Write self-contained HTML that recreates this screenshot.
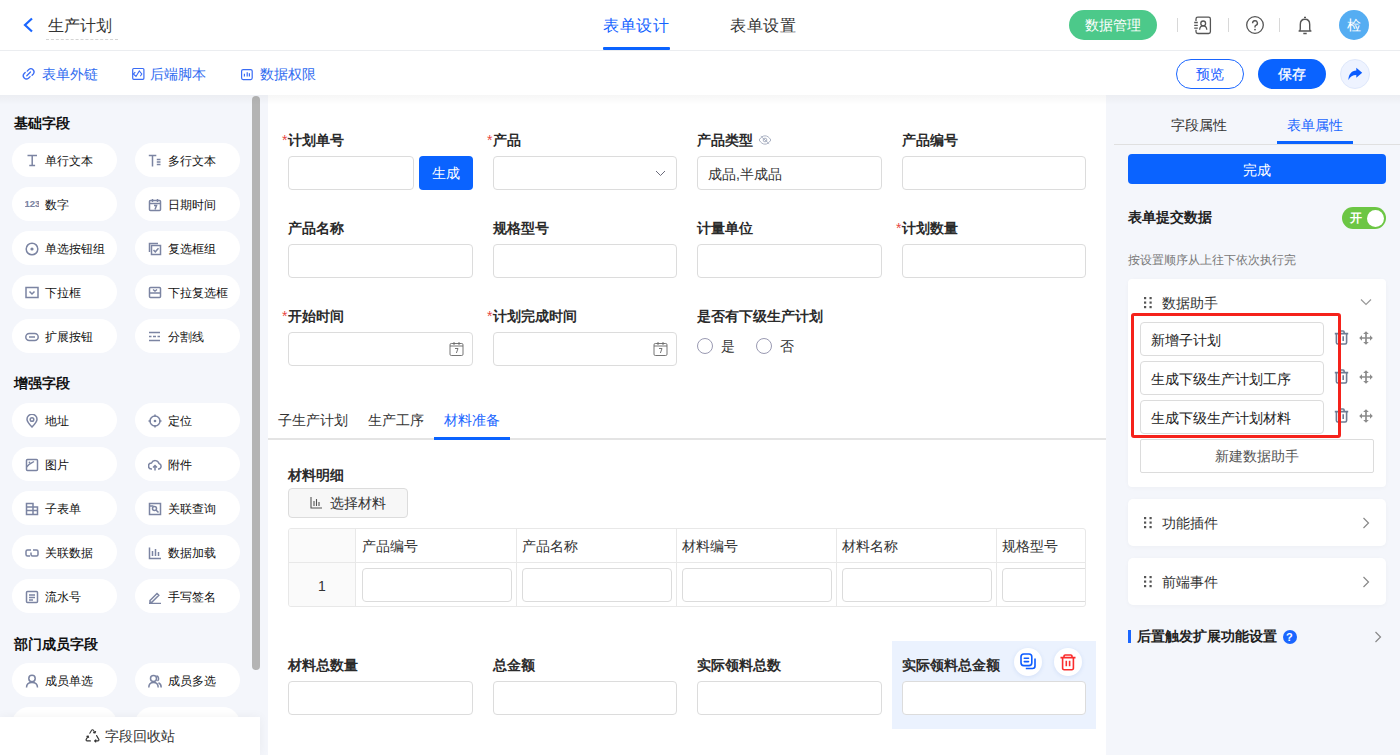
<!DOCTYPE html>
<html><head><meta charset="utf-8">
<style>
*{box-sizing:border-box;margin:0;padding:0}
html,body{width:1400px;height:755px;overflow:hidden;background:#f4f6fb;font-family:"Liberation Sans",sans-serif;color:#333;font-size:14px}
.a{position:absolute}
.t{position:absolute;white-space:nowrap;line-height:1}
/* header */
#hdr{position:absolute;left:0;top:0;width:1400px;height:51px;background:#fff;border-bottom:1px solid #ebedf0}
#tb{position:absolute;left:0;top:51px;width:1400px;height:44px;background:#fff}
.sep{position:absolute;width:1px;height:14px;background:#d8d8d8;top:18px}
.pill{position:absolute;border-radius:17px;background:#fff;height:34px;width:105px}
.ptxt{position:absolute;left:33px;top:12px;font-size:12px;line-height:12px;color:#111;white-space:nowrap}
.pico{position:absolute;left:13px;top:11px;width:14px;height:14px}
.sec{position:absolute;left:14px;font-size:14px;font-weight:bold;color:#111;line-height:14px;white-space:nowrap}
.lbl{position:absolute;font-size:14px;font-weight:bold;color:#2b2b2b;line-height:14px;white-space:nowrap}
.req{color:#e8473f;font-weight:normal}
.inp{position:absolute;background:#fff;border:1px solid #dcdcdc;border-radius:4px;height:34px}
</style></head><body>
<div id="hdr">
  <svg class="a" style="left:22px;top:17px" width="12" height="16" viewBox="0 0 12 16"><path d="M10 1.5 L3 8 L10 14.5" fill="none" stroke="#1a66ff" stroke-width="2.2"/></svg>
  <div class="t" style="left:48px;top:18px;font-size:16px;color:#333">生产计划</div>
  <div class="a" style="left:46px;top:39px;width:72px;border-top:1px dashed #d4d4d4"></div>
  <div class="t" style="left:603px;top:17.5px;font-size:16px;color:#1463ff;letter-spacing:0.7px">表单设计</div>
  <div class="a" style="left:603px;top:47px;width:67px;height:3px;background:#0a63ff;border-radius:1px"></div>
  <div class="t" style="left:730px;top:17.5px;font-size:16px;color:#333;letter-spacing:0.7px">表单设置</div>
  <div class="a" style="left:1069px;top:10px;width:88px;height:30px;border-radius:15px;background:#4cc98a"></div>
  <div class="t" style="left:1085px;top:18px;font-size:14px;color:#fff">数据管理</div>
  
  <svg class="a" style="left:1188px;top:12px" width="30" height="26" viewBox="0 0 30 26"><path d="M8 9V7a1.8 1.8 0 0 1 1.8-1.8h10.8a1.8 1.8 0 0 1 1.8 1.8v12.7a1.8 1.8 0 0 1-1.8 1.8H9.8A1.8 1.8 0 0 1 8 19.7V17.8" fill="none" stroke="#555" stroke-width="1.3"/><path d="M6.2 10.5h3.6M6.2 13.4h3.6M6.2 16.2h3.6" stroke="#555" stroke-width="1.3"/><circle cx="15.2" cy="11.4" r="2.4" fill="none" stroke="#555" stroke-width="1.3"/><path d="M11.6 17.7C11.8 15.3 13.3 13.8 15.2 13.8S18.6 15.3 18.8 17.7" fill="none" stroke="#555" stroke-width="1.3"/></svg>
  <svg class="a" style="left:1245px;top:15px" width="20" height="20" viewBox="0 0 20 20"><circle cx="10" cy="10" r="8.3" fill="none" stroke="#555" stroke-width="1.3"/><path d="M7.6 8.2A2.4 2.4 0 1 1 10.8 10.4C10.2 10.7 10 11.1 10 11.8V12.6" fill="none" stroke="#555" stroke-width="1.4"/><circle cx="10" cy="14.6" r="0.9" fill="#555"/></svg>
  <svg class="a" style="left:1290px;top:12px" width="30" height="26" viewBox="0 0 30 26"><path d="M8.6 19H21.4M9.8 19C10 18.5 10.3 17.8 10.3 16.5V12.5C10.3 9.3 12.3 7.3 15 7.3S19.7 9.3 19.7 12.5V16.5C19.7 17.8 20 18.5 20.2 19" fill="none" stroke="#555" stroke-width="1.4"/><path d="M14 5.3h2M13.3 21.5h3.4" stroke="#555" stroke-width="1.3"/></svg>
<div class="sep" style="left:1177px"></div>
  <div class="sep" style="left:1228px"></div>
  <div class="sep" style="left:1279px"></div>
  <div class="a" style="left:1339px;top:10px;width:30px;height:30px;border-radius:50%;background:#55adf2"></div>
  <div class="t" style="left:1347px;top:18px;font-size:14px;color:#fff">检</div>
</div>
<div id="tb">
  
  <svg class="a" style="left:15px;top:9px" width="30" height="28" viewBox="0 0 30 28"><path d="M10.2 12.5L9 13.7a3.2 3.2 0 0 0 4.5 4.5l1.6-1.6M17.1 15.2L18.3 14a3.2 3.2 0 0 0-4.5-4.5L12.2 11.1M11.8 15.7L15.5 12" fill="none" stroke="#3a6cf5" stroke-width="1.3" stroke-linecap="round"/></svg>
  <svg class="a" style="left:125px;top:9px" width="30" height="28" viewBox="0 0 30 28"><rect x="7.7" y="8.5" width="11.2" height="10.8" rx="1" fill="none" stroke="#3a6cf5" stroke-width="1.2"/><path d="M10.3 12.2L8.3 14L11 16.5L14.3 11L16.8 14L15.3 16.2" fill="none" stroke="#3a6cf5" stroke-width="1.1"/></svg>
  <svg class="a" style="left:232px;top:9px" width="30" height="28" viewBox="0 0 30 28"><rect x="9.6" y="9.6" width="10.6" height="10" rx="1.5" fill="none" stroke="#3a6cf5" stroke-width="1.2"/><path d="M12.4 13.8V16.6M15.2 12.2V16.6M17.4 13.2V16.6" stroke="#3a6cf5" stroke-width="1.2"/></svg>
<div class="t" style="left:42px;top:16px;font-size:14px;color:#2f6bf0">表单外链</div>
  <div class="t" style="left:150px;top:16px;font-size:14px;color:#2f6bf0">后端脚本</div>
  <div class="t" style="left:260px;top:16px;font-size:14px;color:#2f6bf0">数据权限</div>
  <div class="a" style="left:1176px;top:8px;width:68px;height:30px;border-radius:15px;border:1px solid #1a66ff;background:#fff"></div>
  <div class="t" style="left:1196px;top:16px;color:#1a5cff">预览</div>
  <div class="a" style="left:1258px;top:8px;width:68px;height:30px;border-radius:15px;background:#0a63ff"></div>
  <div class="t" style="left:1278px;top:16px;color:#fff;font-weight:500;-webkit-text-stroke:0.3px #fff">保存</div>
  <div class="a" style="left:1340px;top:8px;width:30px;height:30px;border-radius:50%;background:#eef3ff;border:1px solid #dfe8fb"></div><svg class="a" style="left:1340px;top:8px" width="30" height="30" viewBox="0 0 30 30"><path d="M16.3 8.8L22.2 13.7L16.3 18.7V15.9C12.6 15.9 10.2 17.3 8.4 20.9C8.6 15.3 11.6 11.6 16.3 11.5Z" fill="#0a5cff"/></svg>
</div>
<!-- sidebar -->
<div id="side" class="a" style="left:0;top:95px;width:268px;height:660px;background:#f4f6fb;overflow:hidden">
<div class="a" style="left:0;top:-95px;width:268px;height:755px">
<div class="sec" style="top:116px">基础字段</div>
<div class="pill" style="left:12px;top:143px"><svg class="pico" viewBox="0 0 14 14" width="14" height="14"><path d="M2.5 1.5h9.5M7.2 1.5v10M4.3 11.5h5.8" fill="none" stroke="#7b84a2" stroke-width="1.5"/></svg><div class="ptxt">单行文本</div></div>
<div class="pill" style="left:135px;top:143px"><svg class="pico" viewBox="0 0 14 14" width="14" height="14"><path d="M0.8 1.5h7.5M4.5 1.5v11M8.8 5.5h3.7M8.8 8h3.7M8.8 10.5h3.7" fill="none" stroke="#7b84a2" stroke-width="1.5"/></svg><div class="ptxt">多行文本</div></div>
<div class="pill" style="left:12px;top:187px"><svg class="pico" viewBox="0 0 14 14" width="14" height="14"><text x="-0.5" y="8.6" style="font-family:'Liberation Sans';font-weight:bold;font-size:9.5px" fill="#7b84a2" stroke="#7b84a2" stroke-width="0.15" letter-spacing="0">123</text></svg><div class="ptxt">数字</div></div>
<div class="pill" style="left:135px;top:187px"><svg class="pico" viewBox="0 0 14 14" width="14" height="14"><rect x="1.5" y="2.5" width="11" height="10" rx="1" fill="none" stroke="#7b84a2" stroke-width="1.5"/><path d="M1.5 5.5h11M4.5 1v3M9.5 1v3M6 7.5h2.5l-1.5 4" fill="none" stroke="#7b84a2" stroke-width="1.5"/></svg><div class="ptxt">日期时间</div></div>
<div class="pill" style="left:12px;top:231px"><svg class="pico" viewBox="0 0 14 14" width="14" height="14"><circle cx="7" cy="7" r="5.8" fill="none" stroke="#7b84a2" stroke-width="1.5"/><circle cx="7" cy="7" r="1.6" fill="#7a84a0"/></svg><div class="ptxt">单选按钮组</div></div>
<div class="pill" style="left:135px;top:231px"><svg class="pico" viewBox="0 0 14 14" width="14" height="14"><path d="M1.5 10V1.5H10" fill="none" stroke="#7b84a2" stroke-width="1.5"/><rect x="3.5" y="3.5" width="9" height="9" fill="none" stroke="#7b84a2" stroke-width="1.5"/><path d="M5.5 8l1.8 1.8 3.2-3.5" fill="none" stroke="#7b84a2" stroke-width="1.5"/></svg><div class="ptxt">复选框组</div></div>
<div class="pill" style="left:12px;top:275px"><svg class="pico" viewBox="0 0 14 14" width="14" height="14"><rect x="1" y="1.5" width="12" height="10" fill="none" stroke="#7b84a2" stroke-width="1.5"/><path d="M4.5 5.5l2.5 2.5 2.5-2.5" fill="none" stroke="#7b84a2" stroke-width="1.5"/></svg><div class="ptxt">下拉框</div></div>
<div class="pill" style="left:135px;top:275px"><svg class="pico" viewBox="0 0 14 14" width="14" height="14"><rect x="1.5" y="1.5" width="11" height="10" rx="1" fill="none" stroke="#7b84a2" stroke-width="1.5"/><path d="M1.5 7h11M5 3.5l2 1.5 2-1.5" fill="none" stroke="#7b84a2" stroke-width="1.5"/></svg><div class="ptxt">下拉复选框</div></div>
<div class="pill" style="left:12px;top:319px"><svg class="pico" viewBox="0 0 14 14" width="14" height="14"><rect x="0.8" y="3.5" width="12.4" height="7" rx="3.5" fill="none" stroke="#7b84a2" stroke-width="1.5"/><path d="M4 7h6" fill="none" stroke="#7b84a2" stroke-width="1.5"/></svg><div class="ptxt">扩展按钮</div></div>
<div class="pill" style="left:135px;top:319px"><svg class="pico" viewBox="0 0 14 14" width="14" height="14"><path d="M1 2.5h11M1 6.5h2.5M5 6.5h3M9.5 6.5h2.5M1 10.5h11" fill="none" stroke="#7b84a2" stroke-width="1.5"/></svg><div class="ptxt">分割线</div></div>
<div class="sec" style="top:376px">增强字段</div>
<div class="pill" style="left:12px;top:403px"><svg class="pico" viewBox="0 0 14 14" width="14" height="14"><path d="M7 13C3.5 9.5 2 7.3 2 5.3A5 5 0 0 1 12 5.3C12 7.3 10.5 9.5 7 13Z" fill="none" stroke="#7b84a2" stroke-width="1.5"/><circle cx="7" cy="5.5" r="1.8" fill="none" stroke="#7b84a2" stroke-width="1.5"/></svg><div class="ptxt">地址</div></div>
<div class="pill" style="left:135px;top:403px"><svg class="pico" viewBox="0 0 14 14" width="14" height="14"><circle cx="7" cy="7" r="5" fill="none" stroke="#7b84a2" stroke-width="1.5"/><circle cx="7" cy="7" r="1.3" fill="#7a84a0"/><path d="M7 0.5v2.5M7 11v2.5M0.5 7h2.5M11 7h2.5" fill="none" stroke="#7b84a2" stroke-width="1.5"/></svg><div class="ptxt">定位</div></div>
<div class="pill" style="left:12px;top:447px"><svg class="pico" viewBox="0 0 14 14" width="14" height="14"><rect x="1.5" y="1.5" width="11" height="11" rx="1" fill="none" stroke="#7b84a2" stroke-width="1.5"/><path d="M1.5 9C5 5 7 5 9 3.5" fill="none" stroke="#7b84a2" stroke-width="1.5"/><circle cx="4.5" cy="4.5" r="0.9" fill="#7a84a0"/></svg><div class="ptxt">图片</div></div>
<div class="pill" style="left:135px;top:447px"><svg class="pico" viewBox="0 0 14 14" width="14" height="14"><path d="M4 11H3.5A3 3 0 0 1 3.5 5 A4 4 0 0 1 11 5.5 A2.8 2.8 0 0 1 10.5 11H10" fill="none" stroke="#7b84a2" stroke-width="1.5"/><path d="M7 12.5V7.5M5 9.5l2-2 2 2" fill="none" stroke="#7b84a2" stroke-width="1.5"/></svg><div class="ptxt">附件</div></div>
<div class="pill" style="left:12px;top:491px"><svg class="pico" viewBox="0 0 14 14" width="14" height="14"><path d="M1.5 12.5V1.5H8V5H12.5V12.5Z M1.5 5H8M1.5 8.5H12.5M8 5V12.5" fill="none" stroke="#7b84a2" stroke-width="1.5"/></svg><div class="ptxt">子表单</div></div>
<div class="pill" style="left:135px;top:491px"><svg class="pico" viewBox="0 0 14 14" width="14" height="14"><rect x="1.5" y="1.5" width="11" height="11" fill="none" stroke="#7b84a2" stroke-width="1.5"/><circle cx="6.5" cy="6.5" r="2" fill="none" stroke="#7b84a2" stroke-width="1.5"/><path d="M8 8l2.5 2.5M1.5 4h4" fill="none" stroke="#7b84a2" stroke-width="1.5"/></svg><div class="ptxt">关联查询</div></div>
<div class="pill" style="left:12px;top:535px"><svg class="pico" viewBox="0 0 14 14" width="14" height="14"><path d="M6 4H2.5A1.5 1.5 0 0 0 1 5.5v3A1.5 1.5 0 0 0 2.5 10H5M8 4h3.5A1.5 1.5 0 0 1 13 5.5v3a1.5 1.5 0 0 1-1.5 1.5H7.5A1.5 1.5 0 0 1 6 8.5V6.5" fill="none" stroke="#7b84a2" stroke-width="1.5"/></svg><div class="ptxt">关联数据</div></div>
<div class="pill" style="left:135px;top:535px"><svg class="pico" viewBox="0 0 14 14" width="14" height="14"><path d="M1.5 1.5V12.5H13M4.5 5v5M7.5 3v7M10.5 6v4" fill="none" stroke="#7b84a2" stroke-width="1.5"/></svg><div class="ptxt">数据加载</div></div>
<div class="pill" style="left:12px;top:579px"><svg class="pico" viewBox="0 0 14 14" width="14" height="14"><rect x="1.5" y="1.5" width="11" height="11" rx="1" fill="none" stroke="#7b84a2" stroke-width="1.5"/><path d="M4 5h6M4 7.5h6M4 10h4" fill="none" stroke="#7b84a2" stroke-width="1.5"/></svg><div class="ptxt">流水号</div></div>
<div class="pill" style="left:135px;top:579px"><svg class="pico" viewBox="0 0 14 14" width="14" height="14"><path d="M2 10.5L9 3.5l1.8 1.8L3.8 12.3H2Z M1 13.5h12" fill="none" stroke="#7b84a2" stroke-width="1.5"/></svg><div class="ptxt">手写签名</div></div>
<div class="sec" style="top:637px">部门成员字段</div>
<div class="pill" style="left:12px;top:663px"><svg class="pico" viewBox="0 0 14 14" width="14" height="14"><circle cx="7" cy="4.5" r="3.2" fill="none" stroke="#7b84a2" stroke-width="1.5"/><path d="M1.5 13.5C1.5 10 4 8.5 7 8.5S12.5 10 12.5 13.5" fill="none" stroke="#7b84a2" stroke-width="1.5"/></svg><div class="ptxt">成员单选</div></div>
<div class="pill" style="left:135px;top:663px"><svg class="pico" viewBox="0 0 14 14" width="14" height="14"><circle cx="5.5" cy="4.5" r="3" fill="none" stroke="#7b84a2" stroke-width="1.5"/><path d="M0.8 13.5C0.8 10 3 8.5 5.5 8.5S10.2 10 10.2 13.5M8.5 1.8A3 3 0 0 1 9.5 7M10.5 8.8C12 9.5 13.2 11 13.2 13.5" fill="none" stroke="#7b84a2" stroke-width="1.5"/></svg><div class="ptxt">成员多选</div></div>
<div class="pill" style="left:12px;top:707px"><svg class="pico" viewBox="0 0 14 14" width="14" height="14"><circle cx="7" cy="4.5" r="3.2" fill="none" stroke="#7b84a2" stroke-width="1.5"/><path d="M1.5 13.5C1.5 10 4 8.5 7 8.5S12.5 10 12.5 13.5" fill="none" stroke="#7b84a2" stroke-width="1.5"/></svg><div class="ptxt"></div></div>
<div class="pill" style="left:135px;top:707px"><svg class="pico" viewBox="0 0 14 14" width="14" height="14"><circle cx="5.5" cy="4.5" r="3" fill="none" stroke="#7b84a2" stroke-width="1.5"/><path d="M0.8 13.5C0.8 10 3 8.5 5.5 8.5S10.2 10 10.2 13.5M8.5 1.8A3 3 0 0 1 9.5 7M10.5 8.8C12 9.5 13.2 11 13.2 13.5" fill="none" stroke="#7b84a2" stroke-width="1.5"/></svg><div class="ptxt"></div></div>
<div class="a" style="left:252px;top:96px;width:8px;height:574px;border-radius:4px;background:#b4b4b4"></div>
<div class="a" style="left:0;top:717px;width:260px;height:38px;background:#fff;box-shadow:0 0 10px rgba(0,0,0,0.05)"></div>
<svg class="a" style="left:85px;top:729px" width="15" height="14" viewBox="0 0 15 14"><path d="M4.8 4.2L6.6 1.3a1 1 0 0 1 1.8 0L10 4M8.6 3.6L10 4l.6-1.5M11.6 6.6l2.2 3.8a1 1 0 0 1-.9 1.5H9.6M10.8 10.8L9.6 11.9l1.2 1.1M5.4 11.9H2.1a1 1 0 0 1-.9-1.5L3.2 7M1.9 7.4L3.2 7l.4 1.4" fill="none" stroke="#333" stroke-width="1.1" stroke-linecap="round" stroke-linejoin="round"/></svg>
<div class="t" style="left:105px;top:729px;font-size:14px;color:#333">字段回收站</div>
</div>
</div>
<!-- main -->
<div id="main" class="a" style="left:268px;top:95px;width:838px;height:660px;background:#fff;overflow:hidden">
<div class="a" style="left:-268px;top:-95px;width:1400px;height:755px">
<div class="lbl" style="left:282px;top:133px"><span class="req" style="margin-right:1px">*</span>计划单号</div>
<div class="inp" style="left:288px;top:156px;width:126px;height:34px"></div>
<div class="a" style="left:419px;top:156px;width:54px;height:34px;border-radius:4px;background:#0a63ff"></div><div class="t" style="left:432px;top:166px;color:#fff">生成</div>
<div class="lbl" style="left:487px;top:133px"><span class="req" style="margin-right:1px">*</span>产品</div>
<div class="inp" style="left:493px;top:156px;width:184px;height:34px"><svg class="a" style="right:10px;top:13px" width="11" height="7" viewBox="0 0 11 7"><path d="M1 1l4.5 4.5 4.5-4.5" fill="none" stroke="#6b6b7b" stroke-width="1"/></svg></div>
<div class="lbl" style="left:697px;top:133px">产品类型</div>
<svg class="a" style="left:758px;top:135px" width="14" height="10" viewBox="0 0 16 12"><path d="M1 6C3 2.5 5.5 1 8 1S13 2.5 15 6C13 9.5 10.5 11 8 11S3 9.5 1 6Z" fill="none" stroke="#a3abbd" stroke-width="1.1"/><circle cx="8" cy="6" r="2.2" fill="none" stroke="#a3abbd" stroke-width="1.1"/><path d="M3 1.5l10 9" stroke="#a3abbd" stroke-width="1.1"/></svg>
<div class="inp" style="left:697px;top:156px;width:185px;height:34px"><div class="t" style="left:10px;top:10px;color:#333">成品,半成品</div></div>
<div class="lbl" style="left:902px;top:133px">产品编号</div>
<div class="inp" style="left:902px;top:156px;width:184px;height:34px"></div>
<div class="lbl" style="left:288px;top:221px">产品名称</div>
<div class="inp" style="left:288px;top:244px;width:185px;height:34px"></div>
<div class="lbl" style="left:493px;top:221px">规格型号</div>
<div class="inp" style="left:493px;top:244px;width:184px;height:34px"></div>
<div class="lbl" style="left:697px;top:221px">计量单位</div>
<div class="inp" style="left:697px;top:244px;width:185px;height:34px"></div>
<div class="lbl" style="left:896px;top:221px"><span class="req" style="margin-right:1px">*</span>计划数量</div>
<div class="inp" style="left:902px;top:244px;width:184px;height:34px"></div>
<div class="lbl" style="left:282px;top:309px"><span class="req" style="margin-right:1px">*</span>开始时间</div>
<div class="inp" style="left:288px;top:332px;width:185px;height:34px"><svg class="a" style="right:8px;top:8px" width="15" height="15" viewBox="0 0 15 15"><rect x="1" y="2.5" width="13" height="12" rx="1.3" fill="none" stroke="#666" stroke-width="0.9"/><path d="M1 5h13M5 1v3M10 1v3M6 7.5h3l-1.6 4.5" fill="none" stroke="#666" stroke-width="0.9"/></svg></div>
<div class="lbl" style="left:487px;top:309px"><span class="req" style="margin-right:1px">*</span>计划完成时间</div>
<div class="inp" style="left:493px;top:332px;width:184px;height:34px"><svg class="a" style="right:8px;top:8px" width="15" height="15" viewBox="0 0 15 15"><rect x="1" y="2.5" width="13" height="12" rx="1.3" fill="none" stroke="#666" stroke-width="0.9"/><path d="M1 5h13M5 1v3M10 1v3M6 7.5h3l-1.6 4.5" fill="none" stroke="#666" stroke-width="0.9"/></svg></div>
<div class="lbl" style="left:697px;top:309px">是否有下级生产计划</div>
<div class="a" style="left:697px;top:338px;width:16px;height:16px;border-radius:50%;border:1px solid #9a9ab2;background:#fff"></div><div class="t" style="left:721px;top:339px;color:#333">是</div>
<div class="a" style="left:756px;top:338px;width:16px;height:16px;border-radius:50%;border:1px solid #9a9ab2;background:#fff"></div><div class="t" style="left:780px;top:339px;color:#333">否</div>
<div class="a" style="left:268px;top:438px;width:838px;height:2px;background:#e4e4e4"></div>
<div class="t" style="left:278px;top:413px;color:#333">子生产计划</div>
<div class="t" style="left:368px;top:413px;color:#333">生产工序</div>
<div class="t" style="left:444px;top:413px;color:#1a66ff">材料准备</div>
<div class="a" style="left:434px;top:437px;width:76px;height:3px;background:#0a63ff"></div>
<div class="lbl" style="left:288px;top:468px">材料明细</div>
<div class="a" style="left:288px;top:488px;width:120px;height:30px;border:1px solid #dcdcdc;border-radius:4px;background:#f7f7f7"></div>
<svg class="a" style="left:310px;top:496px" width="13" height="13" viewBox="0 0 13 13"><path d="M1 1v11h11M4 5v5M6.5 3v7M9 6v4" fill="none" stroke="#555" stroke-width="1.1"/></svg>
<div class="t" style="left:330px;top:496px;color:#333">选择材料</div>
<div class="a" style="left:288px;top:528px;width:798px;height:79px;border:1px solid #e8e8e8;border-radius:3px;overflow:hidden;background:#fff">
<div class="a" style="left:0;top:0;width:67px;height:77px;background:#fafafa;border-right:1px solid #e8e8e8"></div>
<div class="a" style="left:0;top:33px;width:798px;height:1px;background:#e8e8e8"></div>
<div class="t" style="left:73px;top:10px;color:#333">产品编号</div>
<div class="inp" style="left:73px;top:39px;width:150px;height:34px"></div>
<div class="a" style="left:227px;top:0;width:1px;height:77px;background:#e8e8e8"></div>
<div class="t" style="left:233px;top:10px;color:#333">产品名称</div>
<div class="inp" style="left:233px;top:39px;width:150px;height:34px"></div>
<div class="a" style="left:387px;top:0;width:1px;height:77px;background:#e8e8e8"></div>
<div class="t" style="left:393px;top:10px;color:#333">材料编号</div>
<div class="inp" style="left:393px;top:39px;width:150px;height:34px"></div>
<div class="a" style="left:547px;top:0;width:1px;height:77px;background:#e8e8e8"></div>
<div class="t" style="left:553px;top:10px;color:#333">材料名称</div>
<div class="inp" style="left:553px;top:39px;width:150px;height:34px"></div>
<div class="a" style="left:707px;top:0;width:1px;height:77px;background:#e8e8e8"></div>
<div class="t" style="left:713px;top:10px;color:#333">规格型号</div>
<div class="inp" style="left:713px;top:39px;width:150px;height:34px"></div>
<div class="t" style="left:29px;top:50px;color:#333">1</div>
</div>
<div class="a" style="left:892px;top:641px;width:204px;height:88px;background:#ebf2fe"></div>
<div class="lbl" style="left:288px;top:658px">材料总数量</div>
<div class="inp" style="left:288px;top:681px;width:185px;height:34px"></div>
<div class="lbl" style="left:493px;top:658px">总金额</div>
<div class="inp" style="left:493px;top:681px;width:184px;height:34px"></div>
<div class="lbl" style="left:697px;top:658px">实际领料总数</div>
<div class="inp" style="left:697px;top:681px;width:185px;height:34px"></div>
<div class="lbl" style="left:902px;top:658px">实际领料总金额</div>
<div class="inp" style="left:902px;top:681px;width:184px;height:34px"></div>
<div class="a" style="left:1014px;top:648px;width:28px;height:28px;border-radius:50%;background:#fff;box-shadow:0 1px 4px rgba(30,90,200,0.12)"></div>
<svg class="a" style="left:1020px;top:652px" width="18" height="18" viewBox="0 0 18 18"><rect x="1" y="2" width="10.8" height="11.6" rx="2.8" fill="none" stroke="#0d5cff" stroke-width="1.6"/><path d="M4.3 6.3h4.2M4.3 9.6h4.2" stroke="#0d5cff" stroke-width="1.6" stroke-linecap="round"/><path d="M15 6.5v7.5a2.5 2.5 0 0 1-2.5 2.5H5.8" fill="none" stroke="#0d5cff" stroke-width="1.6"/></svg>
<div class="a" style="left:1054px;top:648px;width:28px;height:28px;border-radius:50%;background:#fff;box-shadow:0 1px 4px rgba(30,90,200,0.12)"></div>
<svg class="a" style="left:1060px;top:654px" width="16" height="17" viewBox="0 0 16 17"><path d="M0.5 3.6h15M4 3.4V2.2A1.2 1.2 0 0 1 5.2 1h5.6A1.2 1.2 0 0 1 12 2.2v1.2M2.6 3.8v10.4a1.5 1.5 0 0 0 1.5 1.5h7.8a1.5 1.5 0 0 0 1.5-1.5V3.8M6.3 6.7v5.5M9.6 6.7v5.5" fill="none" stroke="#fa2c2c" stroke-width="1.6"/></svg>
</div></div>
<!-- right -->
<div id="right" class="a" style="left:1106px;top:95px;width:294px;height:660px;background:#f4f6fb;overflow:hidden">
<div class="a" style="left:-1106px;top:-95px;width:1400px;height:755px">
<div class="a" style="left:1114px;top:144px;width:286px;height:1px;background:#e0e0e0"></div>
<div class="t" style="left:1171px;top:118px;color:#333">字段属性</div>
<div class="t" style="left:1287px;top:118px;color:#1a66ff">表单属性</div>
<div class="a" style="left:1277px;top:141px;width:76px;height:3px;background:#0a63ff"></div>
<div class="a" style="left:1128px;top:154px;width:258px;height:30px;border-radius:4px;background:#0a63ff"></div>
<div class="t" style="left:1243px;top:163px;color:#fff">完成</div>
<div class="lbl" style="left:1128px;top:210px;color:#222">表单提交数据</div>
<div class="a" style="left:1342px;top:207px;width:44px;height:22px;border-radius:11px;background:#6cc644"></div>
<div class="a" style="left:1367px;top:209.5px;width:17px;height:17px;border-radius:50%;background:#fff"></div>
<div class="t" style="left:1350px;top:212px;font-size:12px;color:#fff;font-weight:bold">开</div>
<div class="t" style="left:1128px;top:254px;font-size:12px;color:#777">按设置顺序从上往下依次执行完</div>
<div class="a" style="left:1128px;top:279px;width:258px;height:208px;border-radius:4px;background:#fff;box-shadow:0 1px 4px rgba(0,0,0,0.03)"></div>
<svg class="a" style="left:1143px;top:296px" width="10" height="13" viewBox="0 0 10 13"><g fill="#555"><rect x="1" y="1" width="2.2" height="2.2"/><rect x="6.5" y="1" width="2.2" height="2.2"/><rect x="1" y="5.5" width="2.2" height="2.2"/><rect x="6.5" y="5.5" width="2.2" height="2.2"/><rect x="1" y="10" width="2.2" height="2.2"/><rect x="6.5" y="10" width="2.2" height="2.2"/></g></svg>
<div class="t" style="left:1162px;top:296px;color:#333">数据助手</div>
<svg class="a" style="left:1360px;top:298px" width="12" height="8" viewBox="0 0 12 8"><path d="M1 1.5l5 5 5-5" fill="none" stroke="#999" stroke-width="1.2"/></svg>
<div class="inp" style="left:1140px;top:322px;width:184px;height:34px"><div class="t" style="left:10px;top:10px;color:#222">新增子计划</div></div>
<svg class="a" style="left:1334px;top:330px" width="15" height="15" viewBox="0 0 15 15"><path d="M4.9 3.4V2a1 1 0 0 1 1-1h3.2a1 1 0 0 1 1 1v1.4M0.8 3.6h13.4M2.4 4v8.6a1.4 1.4 0 0 0 1.4 1.4h7.4a1.4 1.4 0 0 0 1.4-1.4V4M5.8 6.3v4.8M9.2 6.3v4.8" fill="none" stroke="#6f7c93" stroke-width="1.6"/></svg>
<svg class="a" style="left:1359px;top:331px" width="14" height="14" viewBox="0 0 14 14"><path d="M7 2.5v9M2.5 7h9" stroke="#8c8c8c" stroke-width="1.7"/><path d="M7 0.2L9.8 3H4.2ZM7 13.8L9.8 11H4.2ZM0.2 7L3 4.2V9.8ZM13.8 7L11 4.2V9.8Z" fill="#8c8c8c"/></svg>
<div class="inp" style="left:1140px;top:361px;width:184px;height:34px"><div class="t" style="left:10px;top:10px;color:#222">生成下级生产计划工序</div></div>
<svg class="a" style="left:1334px;top:369px" width="15" height="15" viewBox="0 0 15 15"><path d="M4.9 3.4V2a1 1 0 0 1 1-1h3.2a1 1 0 0 1 1 1v1.4M0.8 3.6h13.4M2.4 4v8.6a1.4 1.4 0 0 0 1.4 1.4h7.4a1.4 1.4 0 0 0 1.4-1.4V4M5.8 6.3v4.8M9.2 6.3v4.8" fill="none" stroke="#6f7c93" stroke-width="1.6"/></svg>
<svg class="a" style="left:1359px;top:370px" width="14" height="14" viewBox="0 0 14 14"><path d="M7 2.5v9M2.5 7h9" stroke="#8c8c8c" stroke-width="1.7"/><path d="M7 0.2L9.8 3H4.2ZM7 13.8L9.8 11H4.2ZM0.2 7L3 4.2V9.8ZM13.8 7L11 4.2V9.8Z" fill="#8c8c8c"/></svg>
<div class="inp" style="left:1140px;top:400px;width:184px;height:34px"><div class="t" style="left:10px;top:10px;color:#222">生成下级生产计划材料</div></div>
<svg class="a" style="left:1334px;top:408px" width="15" height="15" viewBox="0 0 15 15"><path d="M4.9 3.4V2a1 1 0 0 1 1-1h3.2a1 1 0 0 1 1 1v1.4M0.8 3.6h13.4M2.4 4v8.6a1.4 1.4 0 0 0 1.4 1.4h7.4a1.4 1.4 0 0 0 1.4-1.4V4M5.8 6.3v4.8M9.2 6.3v4.8" fill="none" stroke="#6f7c93" stroke-width="1.6"/></svg>
<svg class="a" style="left:1359px;top:409px" width="14" height="14" viewBox="0 0 14 14"><path d="M7 2.5v9M2.5 7h9" stroke="#8c8c8c" stroke-width="1.7"/><path d="M7 0.2L9.8 3H4.2ZM7 13.8L9.8 11H4.2ZM0.2 7L3 4.2V9.8ZM13.8 7L11 4.2V9.8Z" fill="#8c8c8c"/></svg>
<div class="a" style="left:1131px;top:313px;width:210px;height:125px;border:3px solid #f5221b;border-radius:3px"></div>
<div class="a" style="left:1140px;top:439px;width:234px;height:34px;border:1px solid #dcdcdc;border-radius:2px;background:#fff"></div>
<div class="t" style="left:1215px;top:449px;color:#555">新建数据助手</div>
<div class="a" style="left:1128px;top:499px;width:258px;height:47px;border-radius:5px;background:#fff;box-shadow:0 1px 4px rgba(0,0,0,0.03)"></div>
<svg class="a" style="left:1143px;top:516px" width="10" height="13" viewBox="0 0 10 13"><g fill="#555"><rect x="1" y="1" width="2.2" height="2.2"/><rect x="6.5" y="1" width="2.2" height="2.2"/><rect x="1" y="5.5" width="2.2" height="2.2"/><rect x="6.5" y="5.5" width="2.2" height="2.2"/><rect x="1" y="10" width="2.2" height="2.2"/><rect x="6.5" y="10" width="2.2" height="2.2"/></g></svg>
<div class="t" style="left:1162px;top:516px;color:#333">功能插件</div>
<svg class="a" style="left:1362px;top:517px" width="8" height="12" viewBox="0 0 8 12"><path d="M1.5 1l5 5-5 5" fill="none" stroke="#888" stroke-width="1.2"/></svg>
<div class="a" style="left:1128px;top:558px;width:258px;height:47px;border-radius:5px;background:#fff;box-shadow:0 1px 4px rgba(0,0,0,0.03)"></div>
<svg class="a" style="left:1143px;top:575px" width="10" height="13" viewBox="0 0 10 13"><g fill="#555"><rect x="1" y="1" width="2.2" height="2.2"/><rect x="6.5" y="1" width="2.2" height="2.2"/><rect x="1" y="5.5" width="2.2" height="2.2"/><rect x="6.5" y="5.5" width="2.2" height="2.2"/><rect x="1" y="10" width="2.2" height="2.2"/><rect x="6.5" y="10" width="2.2" height="2.2"/></g></svg>
<div class="t" style="left:1162px;top:575px;color:#333">前端事件</div>
<svg class="a" style="left:1362px;top:576px" width="8" height="12" viewBox="0 0 8 12"><path d="M1.5 1l5 5-5 5" fill="none" stroke="#888" stroke-width="1.2"/></svg>
<div class="a" style="left:1128px;top:630px;width:3px;height:13px;background:#1a66ff"></div>
<div class="lbl" style="left:1137px;top:629px;color:#222">后置触发扩展功能设置</div>
<div class="a" style="left:1283px;top:630px;width:14px;height:14px;border-radius:50%;background:#1a66ff"></div>
<div class="t" style="left:1286px;top:632px;font-size:11px;color:#fff;font-weight:bold">?</div>
<svg class="a" style="left:1374px;top:631px" width="8" height="12" viewBox="0 0 8 12"><path d="M1.5 1l5 5-5 5" fill="none" stroke="#888" stroke-width="1.2"/></svg>
</div></div>
<div class="a" style="left:0;top:95px;width:1400px;height:10px;background:linear-gradient(rgba(0,0,0,0.035),rgba(0,0,0,0));pointer-events:none"></div>
</body></html>
